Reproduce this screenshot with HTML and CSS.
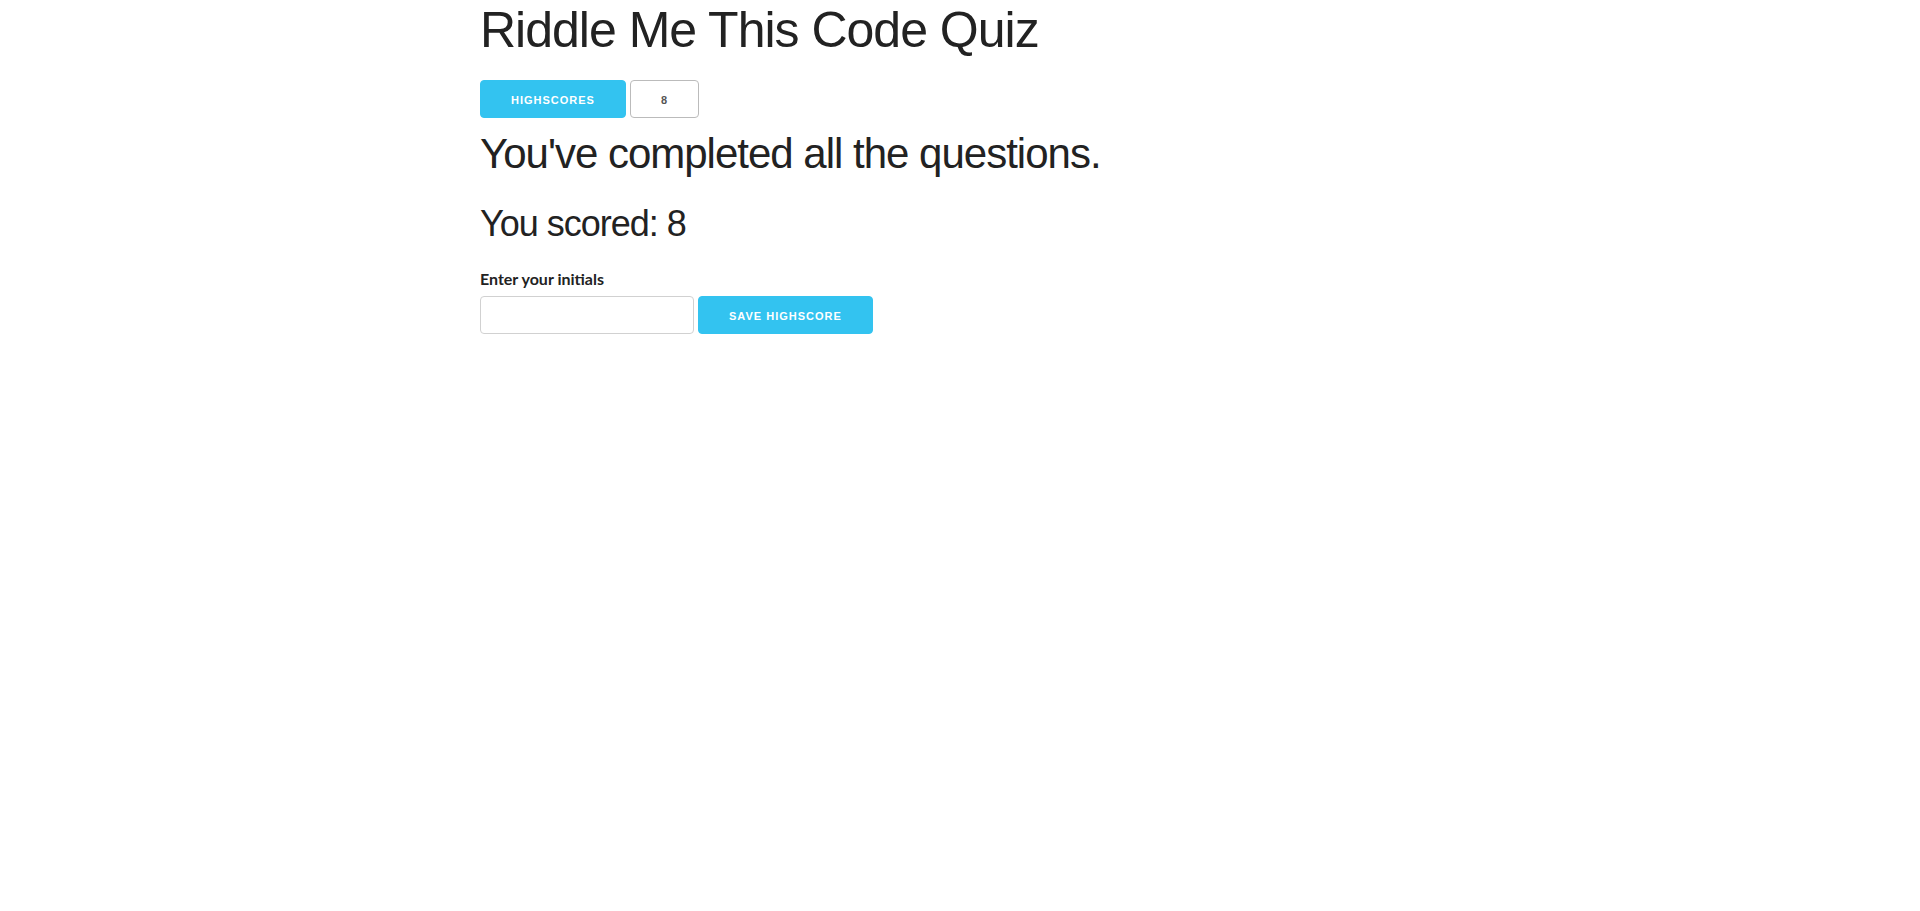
FILE: index.html
```html
<!DOCTYPE html>
<html lang="en">
<head>
<meta charset="utf-8">
<title>Riddle Me This Code Quiz</title>
<link rel="stylesheet" href="styles.css">
</head>
<body>
<div class="container">
  <h1 class="title">Riddle Me This Code Quiz</h1>
  <div class="toolbar">
    <button class="btn btn-primary">Highscores</button>
    <button class="btn btn-default">8</button>
  </div>
  <h2 class="done">You've completed all the questions.</h2>
  <h3 class="score">You scored: 8</h3>
  <form class="save-form">
    <label class="initials-label" for="initials">Enter your initials</label>
    <div class="save-row">
      <input class="initials-input" id="initials" type="text">
      <button class="btn btn-primary" type="button">Save Highscore</button>
    </div>
  </form>
</div>
</body>
</html>
```

FILE: styles.css
```css
html {
  font-size: 62.5%;
}
body {
  margin: 0;
  background: #fff;
  color: #222;
  font-family: "Liberation Sans", Arial, sans-serif;
  font-size: 1.5rem;
  line-height: 1.6;
  font-weight: 400;
}
.container {
  width: 80%;
  max-width: 960px;
  margin: 0 auto;
  padding: 0;
  box-sizing: border-box;
}
h1, h2, h3 {
  margin-top: 0;
  margin-bottom: 2rem;
  font-weight: 300;
  letter-spacing: -0.1rem;
}
.title {
  font-size: 5rem;
  line-height: 1.2;
}
.toolbar {
  display: flex;
  gap: 4px;
  margin-bottom: 1rem;
}
.done {
  font-size: 4.2rem;
  line-height: 1.25;
}
.score {
  font-size: 3.6rem;
  line-height: 1.3;
}
.btn {
  display: inline-block;
  box-sizing: border-box;
  height: 38px;
  padding: 0 30px;
  margin: 0;
  font-family: "Liberation Sans", Arial, sans-serif;
  font-size: 11px;
  font-weight: 700;
  line-height: 38px;
  letter-spacing: 0.1rem;
  text-transform: uppercase;
  text-align: center;
  white-space: nowrap;
  border-radius: 4px;
  cursor: pointer;
}
.btn-primary {
  color: #fff;
  background-color: #33C3F0;
  border: 1px solid #33C3F0;
}
.btn-default {
  color: #555;
  background-color: transparent;
  border: 1px solid #bbb;
}
.save-form {
  margin: 0;
}
.initials-label {
  display: block;
  margin-bottom: 0.5rem;
  font-family: Lato, "Liberation Sans", sans-serif;
  font-size: 16px;
  line-height: 24px;
  font-weight: 700;
  color: #222;
}
.save-row {
  display: flex;
  gap: 4px;
}
.initials-input {
  box-sizing: border-box;
  width: 214px;
  height: 38px;
  padding: 6px 10px;
  margin: 0;
  background-color: #fff;
  border: 1px solid #D1D1D1;
  border-radius: 4px;
  box-shadow: none;
  font: inherit;
}
```
